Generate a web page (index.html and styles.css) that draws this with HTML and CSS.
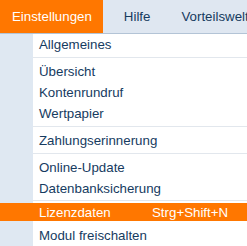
FILE: index.html
```html
<!DOCTYPE html>
<html lang="de">
<head>
<meta charset="utf-8">
<link rel="stylesheet" href="styles.css">
</head>
<body>
<div class="bar">
  <div class="bar-item active">Einstellungen</div>
  <div class="bar-item hilfe">Hilfe</div>
  <div class="bar-item vorteil">Vorteilswelt</div>
</div>
<div class="menu">
  <div class="item first">Allgemeines</div>
  <div class="sep"></div>
  <div class="item">Übersicht</div>
  <div class="item">Kontenrundruf</div>
  <div class="item">Wertpapier</div>
  <div class="sep"></div>
  <div class="item">Zahlungserinnerung</div>
  <div class="sep"></div>
  <div class="item">Online-Update</div>
  <div class="item">Datenbanksicherung</div>
  <div class="sep last-sep"></div>
  <div class="item selected"><span class="label">Lizenzdaten</span><span class="shortcut">Strg+Shift+N</span></div>
  <div class="item modul">Modul freischalten</div>
</div>
</body>
</html>
```
FILE: styles.css
```css
html, body {
  margin: 0;
  padding: 0;
  width: 247px;
  height: 246px;
  overflow: hidden;
  background: #ffffff;
  font-family: "Liberation Sans", Arial, sans-serif;
  font-size: 13.3px;
  color: #163b5f;
}
.bar {
  display: flex;
  height: 33px;
  background: #dfe7f1;
  border-bottom: 1px solid #b3c4d6;
  white-space: nowrap;
  overflow: hidden;
}
.bar-item {
  line-height: 33px;
  flex: none;
}
.bar-item.active {
  background: #ff7700;
  color: #ffffff;
  padding: 0 11px 0 12px;
}
.bar-item.hilfe {
  padding: 0 15px 0 21px;
}
.bar-item.vorteil {
  padding: 0 0 0 16px;
}
.menu {
  display: flex;
  flex-direction: column;
  height: 212px;
  background: linear-gradient(to right, #dfe8f2 0, #dfe8f2 33px, #ffffff 33px);
}
.item {
  display: flex;
  height: 21px;
  line-height: 21px;
  padding-left: 39px;
  white-space: nowrap;
}
.sep {
  height: 1px;
  margin: 2px 0 3px 33px;
  background: #e2e7ed;
}
.last-sep {
  margin: 1px 0 1px 33px;
}
.item.selected {
  background: #ff7700;
  color: #ffffff;
  height: 19px;
  line-height: 17px;
  padding-top: 1px;
  margin-top: 1px;
}
.label {
  width: 113px;
}
.item.modul {
  margin-top: 4px;
}
```
